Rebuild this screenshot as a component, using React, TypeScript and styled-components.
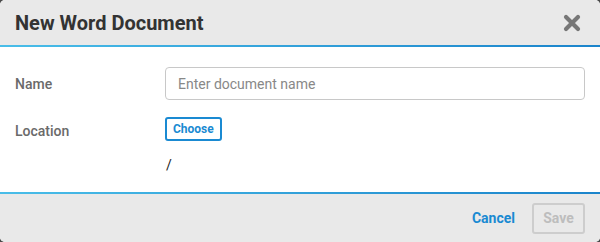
import React from "react";
import styled, { createGlobalStyle } from "styled-components";

const Global = createGlobalStyle`
  html, body { margin: 0; padding: 0; background: #4a4a4a; }
  body { font-family: Roboto, "Liberation Sans", sans-serif; }
  * { box-sizing: border-box; }
`;

const Dialog = styled.div`
  width: 600px;
  height: 242px;
  background: #fff;
  border-radius: 5px;
  overflow: hidden;
  display: flex;
  flex-direction: column;
`;

const Header = styled.div`
  height: 47px;
  flex: none;
  background: #e9e9e9;
  display: flex;
  align-items: center;
  justify-content: space-between;
  padding: 0 18px 2px 15px;
  position: relative;
  &::after {
    content: "";
    position: absolute;
    left: 0; right: 0; bottom: 0;
    height: 2px;
    background: linear-gradient(to right, #49bde8, #1b84cb);
  }
`;

const Title = styled.h1`
  margin: 0;
  font-size: 20px;
  font-weight: 700;
  color: #333;
`;

const Close = styled.button`
  border: 0;
  background: none;
  padding: 0;
  width: 20px;
  height: 20px;
  display: flex;
  align-items: center;
  justify-content: center;
  cursor: pointer;
`;

const Body = styled.div`
  flex: 1;
  padding: 20px 15px 0 15px;
  display: grid;
  grid-template-columns: 150px 1fr;
  grid-auto-rows: min-content;
  row-gap: 17px;
`;

const Label = styled.label<{ $h: number; $offset?: number }>`
  font-size: 14px;
  font-weight: 500;
  color: #6a6a6a;
  display: flex;
  align-items: center;
  height: ${(p) => p.$h}px;
  margin-top: ${(p) => p.$offset ?? 0}px;
`;

const Input = styled.input`
  height: 33px;
  border: 1px solid #c8c8c8;
  border-radius: 4px;
  padding: 0 12px;
  font-family: inherit;
  font-size: 14px;
  color: #333;
  outline: none;
  &::placeholder { color: #888; }
`;

const LocationCol = styled.div`
  display: flex;
  flex-direction: column;
  align-items: flex-start;
  gap: 16px;
`;

const ChooseButton = styled.button`
  height: 24px;
  padding: 0 6px;
  border: 2px solid #1a8ad2;
  border-radius: 3px;
  background: #fff;
  color: #1a8ad2;
  font-family: inherit;
  font-size: 12px;
  font-weight: 700;
`;

const Path = styled.div`
  font-size: 14px;
  color: #222;
  padding-left: 1px;
`;

const Footer = styled.div`
  height: 50px;
  flex: none;
  background: #e9e9e9;
  position: relative;
  display: flex;
  align-items: center;
  justify-content: flex-end;
  gap: 17px;
  padding: 2px 15px 0 0;
  &::before {
    content: "";
    position: absolute;
    left: 0; right: 0; top: 0;
    height: 2px;
    background: linear-gradient(to right, #49bde8, #1b84cb);
  }
`;

const TextButton = styled.button`
  border: 0;
  background: none;
  padding: 0;
  font-family: inherit;
  font-size: 14px;
  font-weight: 700;
  color: #1a8ad2;
`;

const OutlineButton = styled.button`
  height: 31px;
  width: 53px;
  padding: 0;
  border: 2px solid #cdcdcd;
  border-radius: 3px;
  background: transparent;
  color: #bdbdbd;
  font-family: inherit;
  font-size: 14px;
  font-weight: 700;
`;

export default function App() {
  return (
    <>
      <Global />
      <Dialog>
        <Header>
          <Title>New Word Document</Title>
          <Close aria-label="Close">
            <svg width="18" height="18" viewBox="0 0 18 18">
              <path d="M3 3 L15 15 M15 3 L3 15" stroke="#777" strokeWidth="4.2" strokeLinecap="round" />
            </svg>
          </Close>
        </Header>
        <Body>
          <Label $h={33}>Name</Label>
          <Input placeholder="Enter document name" />
          <Label $h={24} $offset={2}>Location</Label>
          <LocationCol>
            <ChooseButton>Choose</ChooseButton>
            <Path>/</Path>
          </LocationCol>
        </Body>
        <Footer>
          <TextButton>Cancel</TextButton>
          <OutlineButton disabled>Save</OutlineButton>
        </Footer>
      </Dialog>
    </>
  );
}
